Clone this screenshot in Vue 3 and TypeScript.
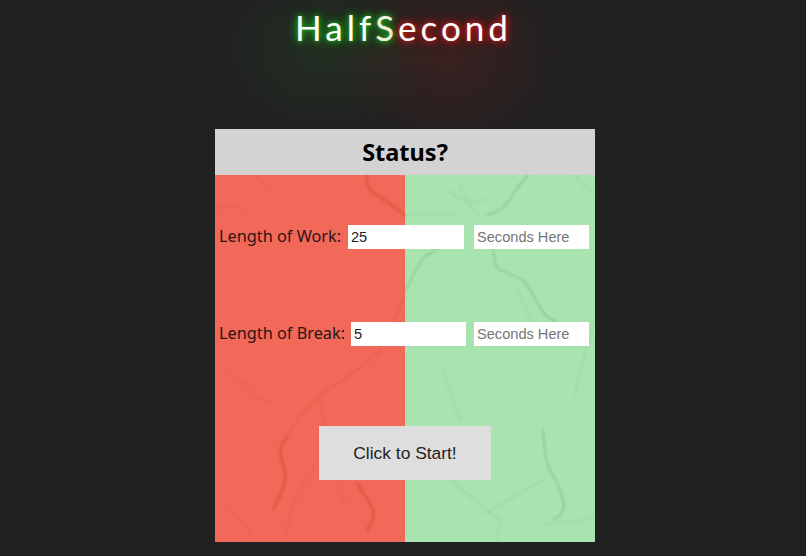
<script setup lang="ts">
const redStrong: string[] = [
  'M152 0C150 8 154 15 160 19C168 24 180 32 190 40',
  'M72 262C66 270 64 274 65 278C68 290 72 298 70 305C68 318 62 326 58 335',
  'M142 308C148 318 154 326 158 335C160 342 156 348 152 355'
]
const redMid: string[] = [
  'M190 120C186 130 182 140 178 147C172 158 168 166 165 175C150 190 140 196 128 205C118 212 112 214 108 218C100 226 94 232 88 238C80 248 76 256 72 262'
]
const redFaint: string[] = [
  'M40 0C46 8 52 10 58 14',
  'M0 35C14 28 24 30 34 40',
  'M10 195C20 205 30 205 40 222C46 226 52 224 58 228',
  'M105 225C115 270 120 300 130 330',
  'M10 330C22 342 34 350 40 367',
  'M100 290C80 320 74 340 70 367'
]
const greenVeins: string[] = [
  'M313 0C308 6 305 9 302 13C297 22 293 28 288 33C283 37 277 38 272 40',
  'M190 117C196 104 202 92 208 83C214 78 220 76 225 73',
  'M278 75C279 82 280 88 282 93C290 98 300 100 308 105C316 115 322 128 328 137C332 142 337 145 342 147',
  'M328 255C329 268 330 278 332 288C336 298 342 306 345 315C348 322 350 328 348 335C346 340 342 343 338 345'
]
const greenFaint: string[] = [
  'M232 15C245 25 258 32 270 24M245 12C250 22 252 30 262 38',
  'M190 40C205 36 225 44 240 38',
  'M228 195C234 215 240 232 245 245',
  'M235 305C255 320 270 335 285 345C284 352 283 360 282 367',
  'M328 305C310 315 295 325 270 338',
  'M360 0C364 8 372 14 378 18',
  'M378 150C372 170 366 190 360 220',
  'M330 350C345 345 365 350 380 340',
  'M300 110C310 130 314 140 318 150'
]
</script>

<template>
  <div class="page">
    <header class="brand">
      <h1 class="logo"><span class="half">Half</span><span class="half second-s">S</span><span class="second">econd</span></h1>
    </header>
    <main class="panel">
      <div class="status">Status?</div>
      <div class="body">
        <svg class="marble" viewBox="0 0 380 367" aria-hidden="true">
          <g fill="none" stroke="#d9442e" stroke-opacity=".15" stroke-width="1.2" stroke-linecap="round">
            <path v-for="d in redFaint" :key="d" :d="d" />
          </g>
          <g fill="none" stroke="#d9442e" stroke-opacity=".35" stroke-width="1.2" stroke-linecap="round">
            <path v-for="d in redMid" :key="d" :d="d" />
          </g>
          <g fill="none" stroke="#d4402a" stroke-opacity=".6" stroke-width="1.8" stroke-linecap="round">
            <path v-for="d in redStrong" :key="d" :d="d" />
          </g>
          <g fill="none" stroke="#6fa87a" stroke-opacity=".22" stroke-width="1.1" stroke-linecap="round">
            <path v-for="d in greenFaint" :key="d" :d="d" />
          </g>
          <g fill="none" stroke="#6a9f74" stroke-opacity=".5" stroke-width="1.3" stroke-linecap="round">
            <path v-for="d in greenVeins" :key="d" :d="d" />
          </g>
        </svg>
        <div class="row row-work">
          <label class="label" for="work">Length of Work:</label>
          <input id="work" class="input main-input" value="25" />
          <input class="input seconds" placeholder="Seconds Here" />
        </div>
        <div class="row row-break">
          <label class="label" for="break">Length of Break:</label>
          <input id="break" class="input main-input" value="5" />
          <input class="input seconds" placeholder="Seconds Here" />
        </div>
        <button class="start" type="button">Click to Start!</button>
      </div>
    </main>
  </div>
</template>

<style scoped>
.page {
  width: 806px;
  height: 556px;
  overflow: hidden;
  background:
    radial-gradient(ellipse 110px 85px at 325px 50px, rgba(40, 110, 40, .18), rgba(40, 110, 40, 0)),
    radial-gradient(ellipse 115px 95px at 450px 55px, rgba(130, 30, 30, .26), rgba(130, 30, 30, 0)),
    #212121;
  display: flex;
  flex-direction: column;
  align-items: center;
}
.brand {
  height: 129px;
  flex: none;
}
.logo {
  margin: 5px 0 0 1px;
  font: 400 35px/44px "Lato", sans-serif;
  letter-spacing: 4px;
  color: #fff;
  white-space: nowrap;
}
.half {
  text-shadow: 0 0 4px #1fa81f, 0 0 8px #1fa81f, 0 0 12px #128012;
}
.second-s {
  color: #f6f0e0;
}
.second {
  text-shadow: 0 0 4px #c01c1c, 0 0 8px #c01c1c, 0 0 12px #900f0f;
}
.panel {
  width: 380px;
  height: 413px;
  margin-left: 4px;
  display: flex;
  flex-direction: column;
  flex: none;
}
.status {
  height: 46px;
  flex: none;
  background: #d3d3d3;
  color: #000;
  font: 700 23.5px/47px "Noto Sans", sans-serif;
  text-align: center;
}
.body {
  position: relative;
  flex: 1;
  background: linear-gradient(90deg, #f26859 0 50%, #a8e3b0 50% 100%);
  display: flex;
  flex-direction: column;
  align-items: center;
}
.marble {
  position: absolute;
  inset: 0;
  width: 100%;
  height: 100%;
  filter: blur(.8px);
}
.row {
  position: relative;
  align-self: stretch;
  height: 24px;
  display: flex;
  align-items: center;
  padding-left: 4px;
}
.row-work {
  margin-top: 50px;
}
.row-break {
  margin-top: 73px;
}
.label {
  color: #2a1512;
  font: 400 16.3px/24px "Noto Sans", sans-serif;
  white-space: nowrap;
  margin-top: -2px;
}
.row-work .label {
  width: 124px;
  margin-right: 5px;
}
.row-break .label {
  width: 127px;
  margin-right: 5px;
}
.input {
  box-sizing: border-box;
  height: 24px;
  border: 0;
  padding: 0 3px;
  background: #fff;
  color: #222;
  font: 400 14.6px "Liberation Sans", sans-serif;
  outline: none;
}
.main-input {
  width: 116px;
}
.row-break .main-input {
  width: 115px;
}
.seconds {
  width: 115px;
  margin-left: 10px;
}
.row-break .seconds {
  margin-left: 8px;
}
.seconds::placeholder {
  color: #757575;
  opacity: 1;
}
.start {
  position: relative;
  width: 172px;
  height: 54px;
  margin-top: 80px;
  border: 0;
  background: #dedede;
  color: #222;
  font: 400 17.4px "Liberation Sans", sans-serif;
  cursor: pointer;
}
</style>
